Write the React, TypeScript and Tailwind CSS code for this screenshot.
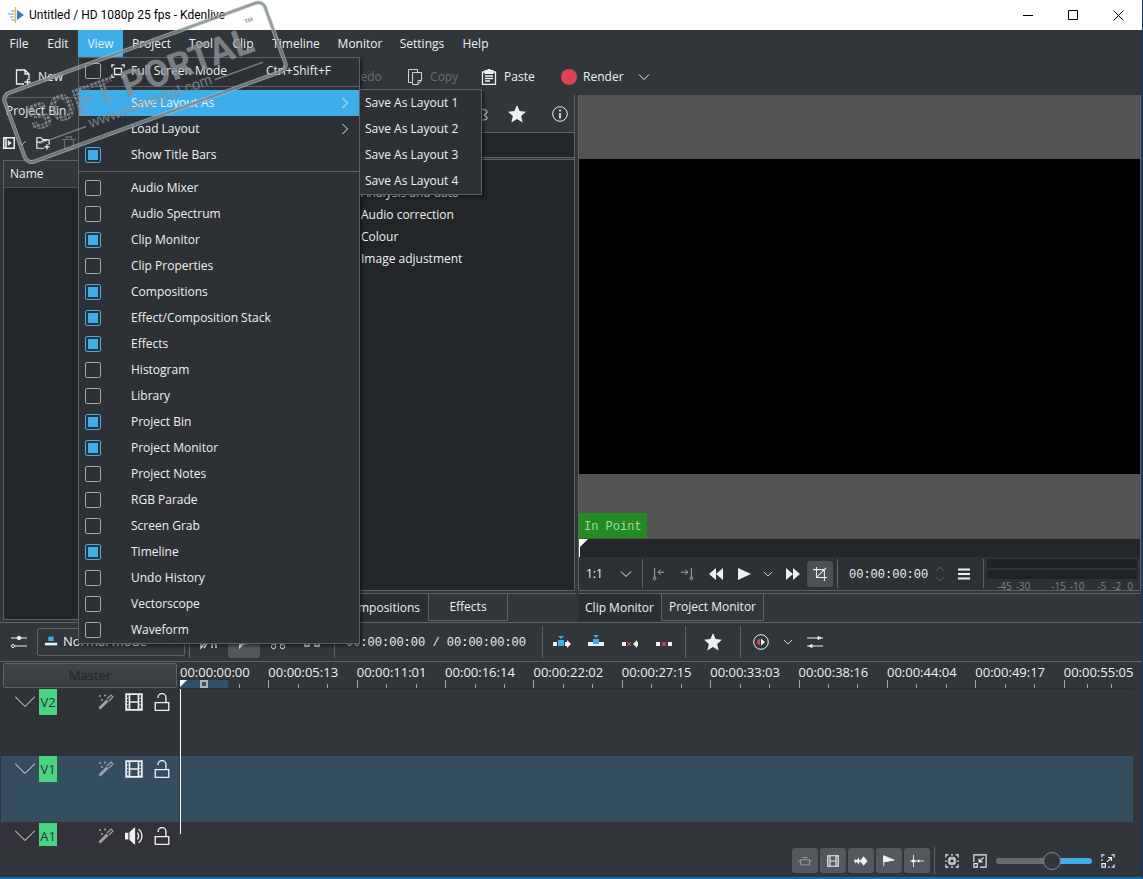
import React from 'react';

const fullMenu = [
  { label: 'Audio Mixer', on: false },
  { label: 'Audio Spectrum', on: false },
  { label: 'Clip Monitor', on: true },
  { label: 'Clip Properties', on: false },
  { label: 'Compositions', on: true },
  { label: 'Effect/Composition Stack', on: true },
  { label: 'Effects', on: true },
  { label: 'Histogram', on: false },
  { label: 'Library', on: false },
  { label: 'Project Bin', on: true },
  { label: 'Project Monitor', on: true },
  { label: 'Project Notes', on: false },
  { label: 'RGB Parade', on: false },
  { label: 'Screen Grab', on: false },
  { label: 'Timeline', on: true },
  { label: 'Undo History', on: false },
  { label: 'Vectorscope', on: false },
  { label: 'Waveform', on: false },
];

const rulerLabels = [
  '00:00:00:00', '00:00:05:13', '00:00:11:01', '00:00:16:14', '00:00:22:02', '00:00:27:15',
  '00:00:33:03', '00:00:38:16', '00:00:44:04', '00:00:49:17', '00:00:55:05',
];

type IconProps = { children: React.ReactNode; className?: string; box?: string };

// line icon on a 16 unit grid
const Icon = ({ children, className = 'size-4', box = '0 0 16 16' }: IconProps) => (
  <svg viewBox={box} className={`shrink-0 ${className}`} fill="none" stroke="currentColor" strokeWidth="1" aria-hidden="true">
    {children}
  </svg>
);

const Chevron = ({ className = 'w-3 h-2' }: { className?: string }) => (
  <Icon className={className} box="0 0 12 8"><path d="M1 1.5l5 5 5-5" /></Icon>
);

const Star = () => (
  <Icon className="size-[18px]"><path fill="currentColor" stroke="none" d="M8 0l2.3 5.4 5.7.5-4.3 3.8 1.3 5.8L8 12.4 3 15.5l1.3-5.8L0 5.9l5.7-.5z" /></Icon>
);

const Film = ({ className = 'size-4' }: { className?: string }) => (
  <Icon className={className}>
    <path strokeWidth="1.5" d="M1 1h14v14H1zM4 1v14M12 1v14M4 8h8" />
    <path strokeDasharray="1 2" d="M2.5 1v14M13.5 1v14" />
  </Icon>
);

const Sep = () => <div className="w-px self-stretch bg-[#5f6265]" />;

const IconButton = ({ label, className = 'w-7', children }: { label: string; className?: string; children: React.ReactNode }) => (
  <button aria-label={label} className={`flex shrink-0 items-center justify-center ${className}`}>
    {children}
  </button>
);

const CheckItem = ({ label, on, children }: { label: string; on: boolean; children?: React.ReactNode }) => (
  <label className="flex h-[26px] items-center pl-1.5">
    <input
      type="checkbox"
      defaultChecked={on}
      className="size-4 shrink-0 appearance-none rounded-[2px] border border-[#a3a6a8] bg-clip-content p-[2px] checked:border-[#3daee9] checked:bg-[#3daee9]"
    />
    <span className="ml-2 flex w-[22px] items-center">{children}</span>
    <span className="flex-1">{label}</span>
  </label>
);

const ViewMenu = () => (
  <div className="absolute left-0 top-full z-20 w-[282px] border border-[#606366] bg-[#2d3035] shadow-[2px_2px_3px_rgba(0,0,0,0.5)]">
    <div className="relative">
      <CheckItem label="Full Screen Mode" on={false}>
        <Icon className="ml-0.5 size-3.5">
          <path strokeWidth="1.5" d="M4 5h8v7H4zM1 4V1h3M12 1h3v3M15 12v3h-3M4 15H1v-3" />
        </Icon>
      </CheckItem>
      <span className="absolute right-7 top-1 leading-[18px]">Ctrl+Shift+F</span>
    </div>
    <div className="mt-0.5 mb-[3px] h-px bg-[#606366]" />
    <div className="relative">
      <button className="flex h-[26px] w-full items-center justify-between bg-[#3daee9] pl-[52px] pr-2">
        Save Layout As
        <Chevron className="h-2 w-3 -rotate-90" />
      </button>
      <div className="absolute -top-px left-full w-[123px] border border-[#606366] bg-[#2d3035] shadow-[2px_2px_3px_rgba(0,0,0,0.5)]">
        {[1, 2, 3, 4].map((n) => (
          <button key={n} className="block h-[26px] w-full whitespace-nowrap pl-[5px] text-left">Save As Layout {n}</button>
        ))}
      </div>
    </div>
    <button className="flex h-[26px] w-full items-center justify-between pl-[52px] pr-2">
      Load Layout
      <Chevron className="h-2 w-3 -rotate-90" />
    </button>
    <CheckItem label="Show Title Bars" on />
    <div className="my-[3px] h-px bg-[#606366]" />
    {fullMenu.map((item) => (
      <CheckItem key={item.label} label={item.label} on={item.on} />
    ))}
  </div>
);

const TitleBar = () => (
  <header className="flex h-[30px] items-center bg-white pl-2 text-black">
    <Icon className="size-4">
      <path stroke="#7fc4e8" strokeWidth="1.5" d="M3 4h4M0 7h6M2 10h4M3 13h4" />
      <path stroke="#e8b64c" strokeWidth="1.5" d="M7.5 0v16" />
      <path fill="#3b7eb5" stroke="none" d="M9 3l7 5-7 5z" />
    </Icon>
    <h1 className="ml-[5px] flex-1 font-['Roboto',sans-serif] text-[12px]">Untitled / HD 1080p 25 fps - Kdenlive</h1>
    <IconButton label="Minimize" className="w-[46px]"><Icon className="size-[10px]" box="0 0 10 10"><path d="M0 5.5h10" /></Icon></IconButton>
    <IconButton label="Maximize" className="w-[44px]"><Icon className="size-[10px]" box="0 0 10 10"><path d="M.5.5h9v9h-9z" /></Icon></IconButton>
    <IconButton label="Close" className="w-[47px]"><Icon className="size-[11px]" box="0 0 11 11"><path d="M.5.5l10 10M10.5.5l-10 10" /></Icon></IconButton>
  </header>
);

const MenuBar = () => (
  <nav className="flex h-[27px] text-[12px]">
    <button className="w-[38px]">File</button>
    <button className="w-10">Edit</button>
    <div className="relative w-[45px]">
      <button className="size-full bg-[#3daee9]">View</button>
      <ViewMenu />
    </div>
    <button className="w-[57px]">Project</button>
    <button className="w-[42px]">Tool</button>
    <button className="w-[42px]">Clip</button>
    <button className="w-[64px]">Timeline</button>
    <button className="w-[64px]">Monitor</button>
    <button className="w-[60px]">Settings</button>
    <button className="w-[47px]">Help</button>
  </nav>
);

const ToolBar = () => (
  <div className="flex h-[38px] items-center pl-[15px] pt-0.5 text-[12px]">
    <button className="flex items-center gap-[7px]">
      <Icon><path strokeWidth="1.3" d="M9 15H1.5V1H10l4 4v6M10 1v4h4M12.5 10v6M9.5 13h6" /></Icon>
      New
    </button>
    <button className="ml-[290px] w-[54px] text-left text-[#6b6e71]">Redo</button>
    <button className="flex w-[74px] items-center gap-[7px] text-[#6b6e71]">
      <Icon className="size-4 text-[#d0d2d3]"><path d="M5 13.5H1.5v-13h9V3M5.5 3.5h9v8l-3.500 4H5.5zM11 15.5v-4h3.5" /></Icon>
      Copy
    </button>
    <button className="flex w-[80px] items-center gap-[7px]">
      <Icon><path strokeWidth="1.3" d="M1.5 3h13v12.5h-13zM4 7h8M4 9.5h8M4 12h5" /><path fill="currentColor" stroke="none" d="M3.5 1h3V0h3v1h3v4h-9z" /></Icon>
      Paste
    </button>
    <button className="flex items-center gap-1.5">
      <span className="size-4 rounded-full bg-[#da4453]" />
      Render
      <Chevron className="ml-2 h-2 w-3" />
    </button>
  </div>
);

const ProjectBin = () => (
  <section className="flex min-h-0 flex-col py-0.5 pl-[3px] pr-1">
    <h2 className="h-7 border-t border-[#5f6265] pl-[3px] pt-1 text-[12px]">Project Bin</h2>
    <div className="flex h-[35px] items-center">
      <IconButton label="Add clip" className="w-3"><Icon className="h-3 w-3"><path strokeWidth="2" d="M1 1h14v14H1zM4 1v14" /><path fill="currentColor" d="M7 5l4 3-4 3z" /></Icon></IconButton>
      <IconButton label="Add clip options" className="w-[14px]"><Chevron className="h-1.5 w-2.5" /></IconButton>
      <IconButton label="Create folder" className="ml-1.5 w-4"><Icon className="size-3.5"><path strokeWidth="1.4" d="M9 14H1V2h5l1.5 2H15v6M1 7h5l2-2h7M12.5 9.5v6M9.5 12.5h6" /></Icon></IconButton>
      <IconButton label="Delete" className="ml-2.5 w-4 text-[#6b6e71]"><Icon className="size-3.5"><path strokeWidth="1.3" d="M0 4h16M5 4V1h6v3M3 4v11h10V4" /></Icon></IconButton>
    </div>
    <div className="flex flex-1 flex-col border border-[#5f6265] bg-[#232629]">
      <div className="flex h-[27px] items-center border-b border-[#4d5053] bg-[#31363b] pl-1.5 text-[12px]">Name</div>
    </div>
  </section>
);

const EffectsPanel = () => (
  <section className="flex min-h-0 flex-col">
    <div className="mr-px flex flex-1 flex-col border-b border-r border-[#5f6265]">
      <div className="flex h-[37px] items-center justify-end">
        <IconButton label="Audio effects" className="w-4 text-[#a0a3a5]">
          <Icon><path strokeWidth="1.5" d="M6 3c6 0 9 1 9 3s-3 2-3 3 3 1 3 3-3 2-5 2" /></Icon>
        </IconButton>
        <IconButton label="Favourites" className="w-[58px]"><Star /></IconButton>
        <IconButton label="Info" className="w-7">
          <Icon><circle cx="8" cy="8" r="7.3" /><path strokeWidth="1.6" d="M8 3.5v2M8 7v5.5" /></Icon>
        </IconButton>
      </div>
      <input aria-label="Search effects" className="h-[26px] w-full border-y border-[#5f6265] bg-[#232629] px-2" />
      <ul className="mt-px flex-1 border-t border-[#5f6265] bg-[#232629] pl-[81px] pt-[22px] text-[12px] leading-[22px]">
        <li>Analysis and data</li>
        <li>Audio correction</li>
        <li>Colour</li>
        <li>Image adjustment</li>
      </ul>
    </div>
    <div className="mt-0.5 flex h-[29px] border-t border-[#5f6265] text-[12px]">
      <button className="h-[27px] w-[148px] bg-[#2a2e32] pr-2 text-right">Compositions</button>
      <button className="h-[27px] w-20 rounded-b-[2px] border border-t-0 border-[#5f6265]">Effects</button>
    </div>
  </section>
);

const Monitor = () => (
  <section className="flex min-h-0 flex-col pl-0.5 pr-px">
    <div className="flex flex-1 flex-col rounded-b-[2px] border-x border-b border-[#5f6265]">
      <div className="relative flex flex-1 flex-col justify-center bg-[#535353]">
        <div className="aspect-video w-full bg-black" />
        <span className="absolute bottom-0 left-0 bg-[#228b22] px-[5px] pb-0.5 pt-1.5 font-['Liberation_Mono',monospace] text-[12px] leading-[17px] text-[#a4dba4]">In Point</span>
      </div>
      <div className="h-[19px] border-t border-[#4d5053] bg-[#232629]">
        <Icon className="h-[18px] w-[9px]" box="0 0 9 18"><path fill="#fff" stroke="none" d="M0 0h9L1 8v10H0z" /></Icon>
      </div>
      <div className="flex h-[33px] items-center bg-[#2d3136] py-0.5">
        <button className="flex w-[63px] items-center justify-between pl-[7px] pr-2.5 text-[12px]">1:1 <Chevron /></button>
        <Sep />
        <IconButton label="Set in point" className="w-8 text-[#b5b8ba]"><Icon className="size-3.5"><path d="M3 1v11M7 6h7M10 3L7 6l3 3" /><circle cx="3" cy="13" r="1.5" /></Icon></IconButton>
        <IconButton label="Set out point" className="w-6 text-[#b5b8ba]"><Icon className="size-3.5"><path d="M13 1v11M1 6h8M6 3l3 3-3 3" /><circle cx="13" cy="13" r="1.5" /></Icon></IconButton>
        <IconButton label="Rewind" className="w-[34px]"><Icon><path fill="currentColor" stroke="none" d="M8 2v12L1 8zM15 2v12L8 8z" /></Icon></IconButton>
        <IconButton label="Play" className="w-[22px]"><Icon><path fill="currentColor" stroke="none" d="M2 2l13 6-13 6z" /></Icon></IconButton>
        <IconButton label="Play options" className="w-[26px]"><Chevron className="h-2 w-2.5" /></IconButton>
        <IconButton label="Forward" className="w-6"><Icon><path fill="currentColor" stroke="none" d="M1 2l7 6-7 6zM8 2l7 6-7 6z" /></Icon></IconButton>
        <IconButton label="Crop" className="ml-0.5 h-[26px] w-[26px] rounded-[3px] bg-[#4d5055]"><Icon className="size-3.5"><path strokeWidth="1.2" d="M4 0v12h12M0 3h13v13M4 12l11-11" /></Icon></IconButton>
        <div className="ml-1 self-stretch"><div className="h-full w-px bg-[#5f6265]" /></div>
        <input aria-label="Position" defaultValue="00:00:00:00" className="ml-[11px] w-[82px] shrink-0 bg-transparent pt-0.5 font-['Liberation_Mono',monospace] text-[12px]" />
        <div className="flex flex-col gap-1 pl-1 text-[#6b6e71]">
          <Chevron className="h-1.5 w-2.5 rotate-180" />
          <Chevron className="h-1.5 w-2.5" />
        </div>
        <IconButton label="Monitor menu" className="w-[38px]"><Icon><path strokeWidth="2" d="M2 3.5h12M2 8h12M2 12.5h12" /></Icon></IconButton>
        <Sep />
        <div className="flex min-w-0 flex-1 flex-col gap-0.5 self-stretch px-[3px]">
          <div className="h-[9px] shrink-0 bg-[#202326]" />
          <div className="h-[9px] shrink-0 bg-[#202326]" />
          <div className="flex justify-between pl-2.5 pr-1 text-[10px] leading-[10px] text-[#808386]">
            <span className="flex gap-1"><span>-45</span><span>-30</span></span>
            <span className="flex gap-1 pl-2"><span>-15</span><span>-10</span></span>
            <span className="flex gap-1.5"><span>-5</span><span>-2</span><span>0</span></span>
          </div>
        </div>
      </div>
    </div>
    <div className="mt-0.5 flex h-[29px] border-t border-[#5f6265] text-[12px]">
      <button className="h-[27px] w-[83px] whitespace-nowrap bg-[#2a2e32]">Clip Monitor</button>
      <button className="h-[27px] w-[103px] whitespace-nowrap rounded-b-[2px] border border-t-0 border-[#5f6265]">Project Monitor</button>
    </div>
  </section>
);

const TimelineBar = () => (
  <div className="flex h-[40px] items-center border-y border-[#5f6265] py-[3px]">
    <IconButton label="Track options" className="w-[37px]"><Icon><path d="M0 4h16M4 12h12" /><circle cx="8" cy="4" r="1.8" fill="currentColor" /><circle cx="2" cy="12" r="1.5" /></Icon></IconButton>
    <div className="relative h-7 w-[148px] shrink-0">
      <select aria-label="Edit mode" className="size-full appearance-none rounded-[2px] border border-[#5f6265] pl-[25px] text-[13px]">
        <option>Normal mode</option>
      </select>
      <Icon className="absolute left-[7px] top-1.5 size-3.5"><path fill="currentColor" stroke="none" d="M1 10h14v3H1z" /><path fill="#3daee9" stroke="none" d="M5 3h6v5H5z" /></Icon>
      <Chevron className="absolute right-1.5 top-2.5 h-2 w-2.5" />
    </div>
    <div className="ml-1 self-stretch"><div className="h-full w-px bg-[#5f6265]" /></div>
    <IconButton label="Mix" className="w-[38px]"><Icon className="h-4 w-[18px]"><path strokeWidth="1.4" d="M0 14V6l7-4v4zM3 14l6-9M11 5v9M15 5v9M11 6l4 5" /></Icon></IconButton>
    <IconButton label="Selection tool" className="h-[31px] w-8 rounded-[3px] bg-[#54575c]"><Icon><path fill="currentColor" stroke="none" d="M3 1v14l4-4 8-2z" /></Icon></IconButton>
    <IconButton label="Razor tool" className="w-9"><Icon><path strokeWidth="1.2" d="M3 1l8 10M13 1L5 11" /><circle cx="3.5" cy="12.5" r="2.2" /><circle cx="12.5" cy="12.5" r="2.2" /></Icon></IconButton>
    <IconButton label="Spacer tool" className="w-8"><Icon><path strokeWidth="1.5" d="M1 6h4v6H1zM11 6h4v6h-4zM6 9h4" /></Icon></IconButton>
    <div className="ml-1.5 self-stretch"><div className="h-full w-px bg-[#5f6265]" /></div>
    <span className="flex w-[191px] shrink-0 justify-end whitespace-pre pt-0.5 font-['Liberation_Mono',monospace] text-[12px]">00:00:00:00 / 00:00:00:00</span>
    <div className="ml-4 self-stretch"><div className="h-full w-px bg-[#5f6265]" /></div>
    <IconButton label="Insert clip" className="ml-0.5 w-[34px]"><Icon className="h-4 w-[18px]" box="0 0 18 16"><path fill="currentColor" stroke="none" d="M0 8h4v4H0zM12 8h2V6l4 4-4 4v-2h-2z" /><path fill="#3daee9" stroke="none" d="M5 6h6v6H5zM5 2h6L8 5z" /></Icon></IconButton>
    <IconButton label="Overwrite clip" className="w-[34px]"><Icon><path fill="currentColor" stroke="none" d="M0 8h16v4H0z" /><path fill="#3daee9" stroke="none" d="M5 5h6v5H5zM5 1h6L8 4z" /></Icon></IconButton>
    <IconButton label="Extract clip" className="w-[34px]"><Icon><path fill="currentColor" stroke="none" d="M0 8h4v4H0zM16 8h-1V6l-4 4 4 4v-2h1z" /><path stroke="#e0593f" d="M5 8l4 4M9 8l-4 4" /></Icon></IconButton>
    <IconButton label="Lift clip" className="w-[34px]"><Icon><path fill="currentColor" stroke="none" d="M0 8h4v4H0zM12 8h4v4h-4z" /><path stroke="#da4453" strokeWidth="1.3" d="M6 8l4 4M10 8l-4 4" /></Icon></IconButton>
    <div className="ml-1 self-stretch"><div className="h-full w-px bg-[#5f6265]" /></div>
    <IconButton label="Favourite effects" className="w-[54px]"><Star /></IconButton>
    <Sep />
    <IconButton label="Preview render" className="w-10"><Icon><circle cx="8" cy="8" r="7.3" /><path fill="#da4453" stroke="none" d="M7 5v6a3 3 0 010-6z" /><path fill="currentColor" stroke="none" d="M8 4.5l4 3.5-4 3.5z" /></Icon></IconButton>
    <IconButton label="Preview options" className="w-[14px]"><Chevron className="h-2 w-2.5" /></IconButton>
    <IconButton label="Timeline settings" className="w-10"><Icon className="h-4 w-[18px]" box="0 0 18 16"><path d="M1 4h16M1 12h16" /><path fill="currentColor" d="M12 2.5l3 1.5-3 1.5zM6 10.5L3 12l3 1.5z" /></Icon></IconButton>
  </div>
);

const Ruler = () => (
  <div className="flex h-[27px]">
    <div className="w-[180px] shrink-0 pl-[3px] pr-[3px] pt-px">
      <button className="h-[25px] w-full rounded-[2px] border border-[#5f6265] bg-linear-to-b from-[#3f4448] to-[#373c40] text-[13px] text-[#23272a]">Master</button>
    </div>
    <div className="relative mr-2 grid flex-1 grid-cols-[repeat(10,minmax(0,88fr))_minmax(0,70fr)] border-b border-[#292d31]">
      {rulerLabels.map((label) => (
        <div key={label} className="flex flex-col justify-between whitespace-nowrap text-[13px] leading-[21px]">
          <span className="h-[18px]">{label}</span>
          <div className="flex h-2 items-end">
            <i className="h-2 w-1/3 border-l border-[#a0a3a5]" />
            <i className="h-1 w-1/3 border-l border-[#a0a3a5]" />
            <i className="h-1 w-1/3 border-l border-[#a0a3a5]" />
          </div>
        </div>
      ))}
      <div className="absolute bottom-0 left-0 h-2 w-12 bg-[#2f5068]">
        <span className="absolute bottom-0 left-5 size-2 border-2 border-[#b0b3b5]" />
        <Icon className="size-2" box="0 0 8 8"><path fill="#fff" stroke="none" d="M0 0h7L0 7z" /></Icon>
      </div>
    </div>
  </div>
);

type TrackProps = { name: string; head: string; lane: string; size: string; laneSize?: string; audio?: boolean };

const Track = ({ name, head, lane, size, laneSize = 'h-full', audio }: TrackProps) => (
  <div className={`flex pr-[9px] ${size}`}>
    <div className={`ml-px flex w-[178px] shrink-0 items-start overflow-hidden ${head}`}>
      <IconButton label="Collapse track" className="ml-3.5 h-[26px] w-5"><Icon className="h-3 w-5" box="0 0 20 12"><path d="M0 .5l10 10 10-10" /></Icon></IconButton>
      <span className="ml-1 h-[26px] w-[18px] shrink-0 bg-[#4ad482] text-center text-[13px] leading-[27px] text-[#22382c]">{name}</span>
      <IconButton label="Track effects" className="ml-10 h-[26px] w-[18px] text-[#a0a3a5]"><Icon><path strokeWidth="3" d="M1.5 14.5l8-8" /><path strokeWidth="1.2" d="M9 5l4-4 2 2-4 4M1 2h2M2 1v2M6 1.5h2M7 .5v2M3 6h2M4 5v2" /></Icon></IconButton>
      <IconButton label={audio ? 'Mute' : 'Hide'} className="ml-2.5 h-[26px] w-[18px]">
        {audio
          ? <Icon className="size-[18px]"><path fill="currentColor" stroke="none" d="M0 5h3v6H0zM4 4.5L9 0v16l-5-4.500z" /><path strokeWidth="1.2" d="M11 5c1.5 2 1.5 4 0 6M12 2c4 3 4 9 0 12" /></Icon>
          : <Film className="size-[18px]" />}
      </IconButton>
      <IconButton label="Lock track" className="ml-2.5 h-[26px] w-[18px]"><Icon className="size-[18px]"><path strokeWidth="1.2" d="M2 8.5h12v7H2zM4.500 4.500V4a3.500 3.500 0 017 0v4.500" /></Icon></IconButton>
    </div>
    <div className={`ml-0.5 flex-1 ${lane} ${laneSize}`} />
  </div>
);

const Timeline = () => (
  <section>
    <Ruler />
    <div className="relative flex flex-col gap-px">
      <Track name="V2" head="bg-[#2f3237] border-b border-[#292d31]" lane="bg-[#31363b] border-b border-[#292d31]" size="h-[66px]" />
      <Track name="V1" head="bg-[#344e60]" lane="bg-[#344e60]" size="h-[66px]" />
      <Track name="A1" head="bg-[#33323a]" lane="bg-[#34333b]" size="h-[23px]" laneSize="h-3" audio />
      <span className="absolute bottom-3 left-[180px] top-0 w-px bg-white" />
    </div>
  </section>
);

const StatusBar = () => {
  const toggle = 'h-[25px] w-[26px] rounded-[3px] bg-[#54575c]';
  return (
    <footer className="flex h-[31px] items-center justify-end gap-0.5 pb-0.5 pr-5">
      <IconButton label="Thumbnails mode" className={toggle}><Icon className="size-3.5 text-[#a3a6a8]"><path d="M3 6.5h10v6H3zM5 4h6M0 8h3M13 8h3" /></Icon></IconButton>
      <IconButton label="Video thumbnails" className={toggle}><Film className="size-3" /></IconButton>
      <IconButton label="Audio thumbnails" className={toggle}><Icon className="size-3.5"><path fill="currentColor" stroke="none" d="M0 7h1.5V5l2.5 3-2.5 3V9H0zM5 4l2 4-2 4-2-4zM11 2.5L15.5 8 11 13.5 6.500 8z" /></Icon></IconButton>
      <IconButton label="Markers" className={toggle}><Icon className="size-3.5"><path fill="currentColor" d="M2 2l12 5-12 2zM2 2v12" /></Icon></IconButton>
      <IconButton label="Snap" className={toggle}><Icon className="size-3.5"><path d="M4 1v14M0 8h16" /><path fill="currentColor" stroke="none" d="M2 6.5h4v3H2zM9 6l3 2-3 2z" /></Icon></IconButton>
      <div className="ml-0.5 h-[27px] w-px bg-[#5f6265]" />
      <IconButton label="Fit zoom" className="ml-0.5 w-[26px]"><Icon className="size-3.5"><path strokeWidth="1.3" d="M1 4V1h3M12 1h3v3M15 12v3h-3M4 15H1v-3M5.500 5.500h5v5h-5zM7 1h2M7 15h2M1 7v2M15 7v2" /><circle cx="8" cy="8" r="4.500" /></Icon></IconButton>
      <IconButton label="Zoom out" className="mr-px w-[26px]"><Icon className="size-3.5"><path strokeWidth="1.3" d="M1 9V1h14v14H8M1 11h4v4H1zM12 4L7 9M7 5v4h4" /></Icon></IconButton>
      <input
        type="range"
        aria-label="Zoom"
        defaultValue={60}
        className="h-1.5 w-24 appearance-none rounded-full bg-linear-to-r from-[#686c6f] from-58% to-[#3daee9] to-58% [&::-webkit-slider-thumb]:size-[18px] [&::-webkit-slider-thumb]:appearance-none [&::-webkit-slider-thumb]:rounded-full [&::-webkit-slider-thumb]:border [&::-webkit-slider-thumb]:border-[#8a8d8f] [&::-webkit-slider-thumb]:bg-[#31363b]"
      />
      <IconButton label="Zoom in" className="w-7"><Icon className="size-3.5"><path strokeWidth="1.3" d="M1 4V1h3M12 1h3v3M15 12v3h-3M1 11h4v4H1zM1 6v2M8 15h2M7 9l5-5M8 4h4v4" /></Icon></IconButton>
    </footer>
  );
};

const Stamp = () => (
  <svg viewBox="0 0 290 165" className="pointer-events-none absolute left-0 top-0 z-30 h-[165px] w-[290px] opacity-80" aria-hidden="true">
    <defs>
      <pattern id="dots" width="4" height="4" patternUnits="userSpaceOnUse">
        <rect width="3" height="3" fill="#8b9297" />
      </pattern>
    </defs>
    <g transform="translate(144 81) rotate(-20)" fill="#8b9297" fontFamily="Roboto, sans-serif">
      <rect x="-138" y="-35" width="277" height="73" rx="7" fill="none" stroke="#b9c4c6" strokeWidth="4" />
      <rect x="-138" y="-35" width="277" height="73" rx="7" fill="none" stroke="#7d8589" strokeWidth="2.5" />
      <text x="-122" y="10" fontSize="37" fontWeight="900" fill="url(#dots)">SOFT</text>
      <text x="-22" y="10" fontSize="37" fontWeight="700">PORTAL</text>
      <text x="114" y="-12" fontSize="16" fontWeight="700">™</text>
      <text x="-66" y="26" fontSize="15" fontFamily="'Liberation Sans', sans-serif">www.softportal.com</text>
      <path d="M-120 23h50M67 23h51" stroke="#8b9297" strokeWidth="1.5" />
    </g>
  </svg>
);

export default function App() {
  return (
    <div className="relative flex min-h-screen flex-col overflow-hidden border-b-2 border-r border-b-[#0a6fae] border-r-[#1b3560] bg-[#31363b] font-['Open_Sans','Noto_Sans',sans-serif] text-[12px] text-[#eff0f1]">
      <TitleBar />
      <MenuBar />
      <ToolBar />
      <main className="grid flex-1 grid-cols-[minmax(0,280fr)_minmax(0,296fr)_minmax(0,566fr)]">
        <ProjectBin />
        <EffectsPanel />
        <Monitor />
      </main>
      <TimelineBar />
      <Timeline />
      <StatusBar />
      <Stamp />
    </div>
  );
}
